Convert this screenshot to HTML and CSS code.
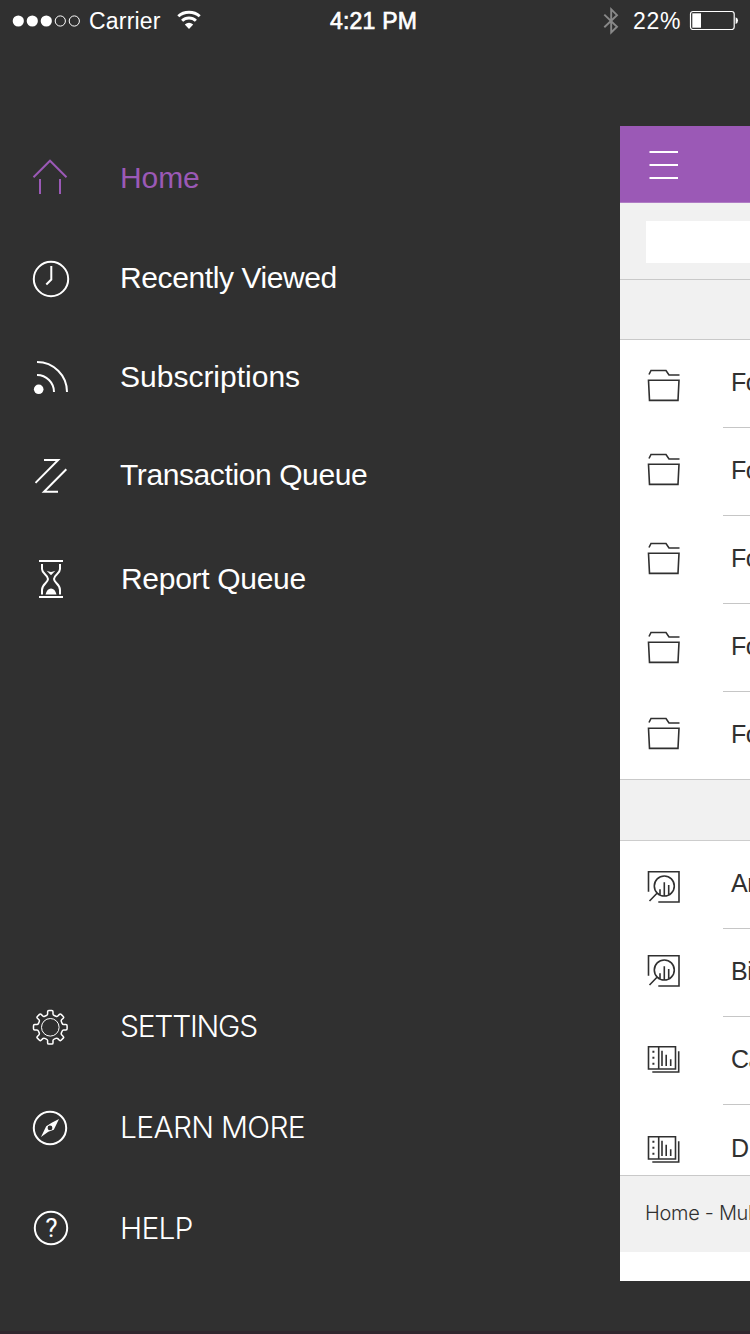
FILE: index.html
```html
<!DOCTYPE html>
<html lang="en">
<head>
<meta charset="utf-8">
<title>Menu</title>
<link rel="stylesheet" href="styles.css">
</head>
<body>
<svg class="defs" width="0" height="0" aria-hidden="true">
  <symbol id="folder" viewBox="0 0 34 34"><path d="M2 5.5 4 1.5H19L22 6H32.5M1.5 11.3H32L31 31.4H2.5Z"/></symbol>
  <symbol id="analysis" viewBox="0 0 34 34"><path d="M1.5 21.7V1.7H32V32H11.3M10 23.3 2.5 31M13 19.3V24.5M17.3 12.3V26M21.7 15V24.5"/><circle cx="17.3" cy="16" r="10"/></symbol>
  <symbol id="cards" viewBox="0 0 34 34"><path d="M1.5 1.7H28.5V24H1.5ZM11.7 1.7V24M15 5.7V21M19.2 9.7V21M23.7 14.3V21M31.7 6.3V27H5.3"/><path class="dots" d="M5.4 5.8h2v2H5.4zM5.4 11.8h2v2H5.4zM5.4 17.8h2v2H5.4z"/></symbol>
</svg>
<header class="status">
  <svg class="signal" width="70" height="14" viewBox="0 0 70 14"><g fill="#fff"><circle cx="6.3" cy="7" r="5.6"/><circle cx="20.3" cy="7" r="5.6"/><circle cx="34.3" cy="7" r="5.6"/></g><g fill="none" stroke="#fff"><circle cx="48.3" cy="7" r="5.1"/><circle cx="62.3" cy="7" r="5.1"/></g></svg>
  <span class="carrier">Carrier</span>
  <svg class="wifi" width="26" height="20" viewBox="0 0 26 20"><path d="M2.3 6.3C8 .9 18 .9 23.7 6.3M6.1 10.8C10 7 16 7 19.9 10.8" fill="none" stroke="#fff" stroke-width="2.9"/><path d="M8.8 14.6Q13 11 17.2 14.6L13 19Z" fill="#fff"/></svg>
  <span class="time">4:21 PM</span>
  <svg class="bluetooth" width="16" height="28" viewBox="0 0 16 28"><path d="M1.3 7.6 14 19.7 8.2 25.4V2.4L14 8.2 1.3 20.3" fill="none" stroke="#898989" stroke-width="1.9"/></svg>
  <span class="percent">22%</span>
  <svg class="battery" width="50" height="20" viewBox="0 0 50 20"><rect x="1.5" y="1.5" width="43.7" height="18" rx="2.5" fill="none" stroke="#fff" stroke-width="1.2"/><rect x="3.3" y="3.3" width="8.7" height="14.4" fill="#fff"/><path d="M46.6 7.2a3.6 3.6 0 0 1 0 6.8z" fill="#fff"/></svg>
</header>
<div class="screen">
  <nav class="menu">
    <a class="item active"><svg class="icon" viewBox="0 0 40 40"><path d="M3.5 19.2 20 2.7 36.5 19.2M10 21V36M30 21V36"/></svg><span>Home</span></a>
    <a class="item recent"><svg class="icon" viewBox="0 0 40 40"><circle cx="21" cy="21" r="17.2"/><path d="M21.3 8V21.5L16.3 26.5"/></svg><span>Recently Viewed</span></a>
    <a class="item subs"><svg class="icon" viewBox="0 0 40 40"><path d="M7 5A30 30 0 0 1 37 35M7 18A17 17 0 0 1 24 35"/><circle class="solid" cx="8.7" cy="32.3" r="4.8"/></svg><span>Subscriptions</span></a>
    <a class="item trans"><svg class="icon" viewBox="0 0 40 40"><path d="M14 5H28.2L5.5 27.9M36.3 14.3 14 36.8H28"/></svg><span>Transaction Queue</span></a>
    <a class="item report"><svg class="icon" viewBox="0 0 40 40"><path d="M9 2H33M9 38H33M12 5V10C12 15 18 16 18 20S12 25 12 31V35.5M30 5V10C30 15 24 16 24 20S30 25 30 31V35.5"/><path class="solid" d="M16.7 11.8Q21 14 25.3 11.8L21 16.3ZM15.5 35.6Q17 29.5 21 29.5T26.5 35.6Z"/></svg><span>Report Queue</span></a>
    <a class="item light settings"><svg class="icon thin" viewBox="-20.3 -20.3 40 40"><path id="gear" d=""/><circle cx="0" cy="0" r="8.8" stroke-width="1"/></svg><span>SETTINGS</span></a>
    <a class="item light learn"><svg class="icon" viewBox="0 0 40 40"><circle cx="20" cy="20" r="16.2"/><path class="solid" fill-rule="evenodd" d="M29 11 23.8 21.8 18.3 23.8 11 29 16.2 18.2 21.7 14.8ZM20 17.5a2.4 2.4 0 1 0 0 4.8 2.4 2.4 0 0 0 0-4.8Z"/></svg><span>LEARN MORE</span></a>
    <a class="item light help"><svg class="icon" viewBox="0 0 40 40"><circle cx="21" cy="19" r="16.2"/><text x="21" y="28.4" text-anchor="middle">?</text></svg><span>HELP</span></a>
  </nav>
  <main class="page">
    <div class="bar"><svg width="30" height="30" viewBox="0 0 30 30"><path d="M.5 2H29M.5 15H29M.5 28H29" stroke="#fff" stroke-width="1.9"/></svg></div>
    <div class="search"><div class="field"></div></div>
    <div class="section"></div>
    <ul class="list">
      <li class="row d4"><svg><use href="#folder"/></svg><span>Fo</span></li>
      <li class="row d0"><svg><use href="#folder"/></svg><span>Fo</span></li>
      <li class="row d1"><svg><use href="#folder"/></svg><span>Fo</span></li>
      <li class="row d2"><svg><use href="#folder"/></svg><span>Fo</span></li>
      <li class="row d0 last"><svg><use href="#folder"/></svg><span>Fo</span></li>
    </ul>
    <div class="section second"></div>
    <ul class="list apps">
      <li class="row d4"><svg><use href="#analysis"/></svg><span>An</span></li>
      <li class="row d0"><svg><use href="#analysis"/></svg><span>Bi</span></li>
      <li class="row d3"><svg><use href="#cards"/></svg><span>Ca</span></li>
      <li class="row d5 last"><svg><use href="#cards"/></svg><span>D</span></li>
    </ul>
    <footer class="crumb">Home - Mul</footer>
  </main>
</div>
<script src="gear.js"></script>
</body>
</html>
```
FILE: gear.js
```js
// Builds the eight-tooth outline of the settings gear.
var d = "";
for (var i = 0; i < 8; i++) {
  var a = i * Math.PI / 4;
  var pt = function (x, y) {
    return (x * Math.cos(a) - y * Math.sin(a)).toFixed(2) + " " + (x * Math.sin(a) + y * Math.cos(a)).toFixed(2);
  };
  d += (i ? "L" : "M") + pt(-3.9, -11.8) + "Q" + pt(-2.7, -12.3) + " " + pt(-2.7, -13.3) +
    "L" + pt(-2.7, -15.6) + "Q" + pt(-2.7, -16.8) + " " + pt(-1.5, -16.8) +
    "L" + pt(1.5, -16.8) + "Q" + pt(2.7, -16.8) + " " + pt(2.7, -15.6) +
    "L" + pt(2.7, -13.3) + "Q" + pt(2.7, -12.3) + " " + pt(3.9, -11.8);
}
document.getElementById("gear").setAttribute("d", d + "Z");
```
FILE: styles.css
```css
* { box-sizing: border-box; }
body { margin: 0; width: 750px; height: 1334px; overflow: hidden; background: #303030; color: #fff; font-family: "Liberation Sans", Arial, sans-serif; border-bottom: 3px solid #30272e; }
svg { display: block; flex: none; }
.defs { position: absolute; }
.status { height: 42px; padding-left: 12px; display: flex; align-items: flex-start; font-size: 23px; line-height: 26px; white-space: nowrap; }
.status span { margin-top: 8px; }
.signal { margin-top: 13.5px; }
.carrier { width: 88px; margin-left: 7px; letter-spacing: .2px; }
.wifi { margin-top: 10px; margin-left: -1px; }
.time { width: 275px; margin-left: 128px; -webkit-text-stroke: .7px #fff; letter-spacing: .2px; }
.bluetooth { margin-top: 7px; margin-left: -2px; }
.percent { width: 56px; margin-left: 14px; letter-spacing: .7px; }
.battery { margin-top: 10px; }
.screen { display: flex; }
.menu { width: 620px; padding-top: 106px; display: flex; flex-direction: column; }
.item { height: 60px; padding: 10px 0 0 30px; display: flex; font-size: 30px; line-height: 34px; letter-spacing: -.4px; }
.item span { margin: 3px 0 0 50px; }
.icon { width: 40px; height: 40px; fill: none; stroke: currentColor; stroke-width: 2; }
.thin { stroke-width: 1.5; }
.icon .solid { fill: currentColor; stroke: none; }
.icon text { font: 26px Roboto, sans-serif; fill: currentColor; stroke: none; }
.active { color: #9b59b6; letter-spacing: -.1px; }
.recent { margin-top: 40px; }
.subs { margin-top: 39px; letter-spacing: 0; }
.trans { margin-top: 38px; }
.report { margin-top: 44px; letter-spacing: -.3px; }
.report span { margin-left: 51px; }
.settings { margin-top: 388px; }
.learn, .help { margin-top: 41px; }
.light { font-family: Inter, sans-serif; font-weight: 300; letter-spacing: -1.25px; }
.light span { margin-top: 2px; }
.light.learn { letter-spacing: -.7px; }
.light.help { letter-spacing: -.8px; }
.page { width: 130px; height: 1155px; margin-top: 84px; overflow: hidden; background: #fff; color: #303030; }
.bar { height: 77px; padding: 23.5px 0 0 29px; background: #9b59b6; border-bottom: 1px solid #b07cc5; }
.search { height: 77px; padding: 18px 0 0 26px; background: #f1f1f1; border-bottom: 1px solid #c9c9c9; }
.field { height: 42px; background: #fff; }
.section { height: 60px; background: #f1f1f1; border-bottom: 1px solid #c9c9c9; }
.second { height: 62px; border-top: 1px solid #c9c9c9; border-bottom: 1px solid #cdcdcd; }
.list { margin: 0; padding: 0; list-style: none; }
.row { height: 88px; padding-left: 27px; display: flex; background: linear-gradient(#c6c6c6, #c6c6c6) 103px 100% / 27px 1px no-repeat; font-size: 25px; line-height: 28px; letter-spacing: -.5px; white-space: nowrap; }
.row svg { width: 34px; height: 34px; fill: none; stroke: #303030; stroke-width: 1.6; }
.row .dots, .dots { fill: #303030; stroke: none; }
.row span { margin: 28px 0 0 50px; }
.row.last { background: none; height: 87px; }
.d4 svg { margin-top: 29px; }
.d0 svg { margin-top: 25px; }
.d1 svg { margin-top: 26px; }
.d2 svg { margin-top: 27px; }
.d3 svg { margin-top: 28px; }
.d5 svg { margin-top: 30px; }
.apps .row.last { height: 70px; }
.apps .row.last span { margin-top: 29px; }
.crumb { height: 77px; padding: 23px 0 0 25px; background: #f1f1f1; border-top: 1px solid #c9c9c9; font: 300 20px/28px Inter, sans-serif; letter-spacing: -.3px; white-space: nowrap; }
```
